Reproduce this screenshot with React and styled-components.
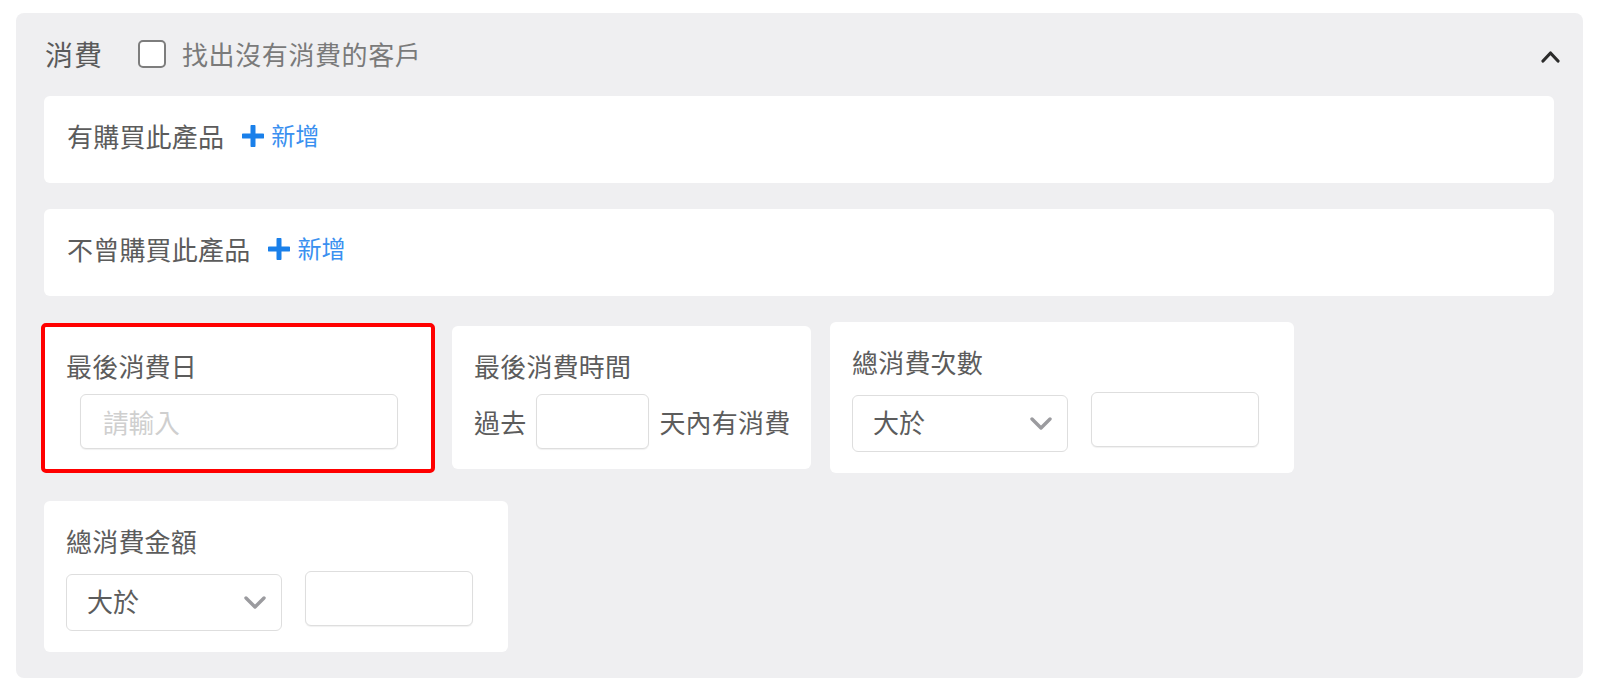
import styled, { createGlobalStyle } from 'styled-components';

const GlobalStyle = createGlobalStyle`
  body {
    margin: 0;
    background: #ffffff;
    font-family: "Noto Sans CJK TC", "Noto Sans", sans-serif;
  }
`;

function PlusIcon() {
  return (
    <svg width="22" height="22" viewBox="0 0 22 22">
      <path d="M11 1.5v19M1.5 11h19" stroke="#1a80ea" strokeWidth="5" strokeLinecap="round" />
    </svg>
  );
}

function ChevronDown() {
  return (
    <svg width="22" height="13" viewBox="0 0 22 13">
      <path d="M2 2l9 9 9-9" fill="none" stroke="#9b9b9f" strokeWidth="3.4" strokeLinecap="round" strokeLinejoin="round" />
    </svg>
  );
}

function ChevronUp() {
  return (
    <svg width="19" height="13" viewBox="0 0 19 13">
      <path d="M2 11l7.5-8 7.5 8" fill="none" stroke="#2b2b2b" strokeWidth="3.2" strokeLinecap="round" strokeLinejoin="round" />
    </svg>
  );
}

function ProductRule({ label }) {
  return (
    <WideCard>
      <Label>{label}</Label>
      <AddLink>
        <PlusIcon />
        <span>新增</span>
      </AddLink>
    </WideCard>
  );
}

function CompareRow({ value }) {
  return (
    <FieldRow $offset={2}>
      <SelectBox>
        <span>{value}</span>
        <ChevronDown />
      </SelectBox>
      <TextBox $width={168} />
    </FieldRow>
  );
}

function App() {
  return (
    <>
      <GlobalStyle />
      <Panel>
        <Header>
          <Title>消費</Title>
          <CheckLabel>
            <CheckBox />
            <span>找出沒有消費的客戶</span>
          </CheckLabel>
          <Collapse>
            <ChevronUp />
          </Collapse>
        </Header>

        <ProductRule label="有購買此產品" />
        <ProductRule label="不曾購買此產品" />

        <CardGrid>
          <Card $width={388} $height={144} $highlight>
            <Label>最後消費日</Label>
            <FieldRow $indent={14}>
              <TextBox $width={318} placeholder="請輸入" />
            </FieldRow>
          </Card>

          <Card $width={359} $height={143}>
            <Label>最後消費時間</Label>
            <FieldRow $gap={10}>
              <Label>過去</Label>
              <TextBox $width={113} />
              <Label>天內有消費</Label>
            </FieldRow>
          </Card>

          <Card $width={464} $height={151}>
            <Label>總消費次數</Label>
            <CompareRow value="大於" />
          </Card>

          <Card $width={464} $height={151}>
            <Label>總消費金額</Label>
            <CompareRow value="大於" />
          </Card>
        </CardGrid>
      </Panel>
    </>
  );
}

const Panel = styled.div`
  margin: 13px 16px;
  width: 1567px;
  box-sizing: border-box;
  padding: 0 29px 26px 28px;
  background: #efeff1;
  border-radius: 8px;
  display: flex;
  flex-direction: column;
  gap: 26px;
`;

const Header = styled.div`
  height: 83px;
  margin-bottom: -26px;
  margin-right: -6px;
  display: flex;
  align-items: center;
  padding-left: 1px;
  padding-top: 2px;
  box-sizing: border-box;
`;

const Title = styled.div`
  font-size: 28px;
  letter-spacing: 1px;
  color: #5a5a5a;
  margin-top: -4px;
`;

const CheckLabel = styled.label`
  display: flex;
  align-items: center;
  gap: 16px;
  margin-left: 35px;
  font-size: 26px;
  letter-spacing: 0.6px;
  color: #7a7a7a;
  span {
    margin-top: -4px;
  }
`;

const CheckBox = styled.span`
  width: 28px;
  height: 28px;
  box-sizing: border-box;
  border: 2px solid #7d7d7d;
  border-radius: 5px;
  background: #fff;
`;

const Collapse = styled.div`
  margin-left: auto;
  display: flex;
  margin-top: 2px;
`;

const WideCard = styled.div`
  height: 87px;
  box-sizing: border-box;
  background: #fff;
  border-radius: 6px;
  padding: 0 23px 8px;
  display: flex;
  align-items: center;
`;

const Label = styled.div`
  font-size: 26px;
  letter-spacing: 0.2px;
  line-height: 38px;
  color: #5c5c5c;
  white-space: nowrap;
`;

const AddLink = styled.div`
  display: flex;
  align-items: center;
  gap: 7px;
  margin-left: 18px;
  font-size: 24px;
  color: #3a90f0;
  span {
    margin-top: -3px;
  }
`;

const CardGrid = styled.div`
  display: flex;
  flex-wrap: wrap;
  align-items: center;
  column-gap: 20px;
  row-gap: 28px;
`;

const Card = styled.div`
  width: ${(p) => p.$width}px;
  height: ${(p) => p.$height}px;
  box-sizing: border-box;
  background: #fff;
  border-radius: ${(p) => (p.$highlight ? '2px' : '6px')};
  padding: 21px 22px 0;
  display: flex;
  flex-direction: column;
  gap: 9px;
  outline: ${(p) => (p.$highlight ? '4px solid #ff0000' : 'none')};
  outline-offset: -1px;
  &:nth-child(3) {
    margin-left: -1px;
  }
`;

const FieldRow = styled.div`
  display: flex;
  align-items: flex-start;
  gap: ${(p) => p.$gap ?? 23}px;
  margin-left: ${(p) => p.$indent ?? 0}px;
  margin-top: ${(p) => p.$offset ?? 0}px;
  ${Label} {
    line-height: 55px;
  }
`;

const TextBox = styled.input`
  width: ${(p) => p.$width}px;
  height: 55px;
  box-sizing: border-box;
  border: 1px solid #dedede;
  border-radius: 6px;
  box-shadow: 0 1px 1px rgba(0, 0, 0, 0.06);
  padding: 0 22px;
  font-family: inherit;
  font-size: 25.6px;
  color: #555;
  outline: none;
  &::placeholder {
    color: #cfcfcf;
  }
`;

const SelectBox = styled.div`
  width: 216px;
  height: 57px;
  margin-top: 3px;
  box-sizing: border-box;
  border: 1px solid #dedede;
  border-radius: 6px;
  padding: 0 15px 0 20px;
  display: flex;
  align-items: center;
  justify-content: space-between;
  font-size: 26px;
  color: #5c5c5c;
  span {
    margin-top: -4px;
  }
`;

export default App;
